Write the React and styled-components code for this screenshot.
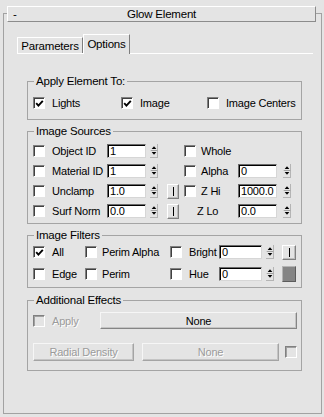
import React from "react";
import styled, { createGlobalStyle, css } from "styled-components";

const BG = "#e4e4e4";

const Global = createGlobalStyle`
  html, body { margin: 0; padding: 0; background: ${BG}; }
  body {
    font-family: "Liberation Sans", Arial, sans-serif;
    font-size: 11px;
    letter-spacing: -0.2px;
    color: #000;
  }
  * { box-sizing: border-box; }
`;

const Page = styled.div`
  width: 324px;
  height: 417px;
  overflow: hidden;
  background: ${BG};
  padding-top: 13px;
`;

const Rollout = styled.div`
  margin-left: 3px;
  width: 319px;
  height: 401px;
  border: 1px solid #a2a2a2;
  display: flex;
  flex-direction: column;
`;

const Header = styled.div`
  margin: -8px 5px 0 3px;
  height: 16px;
  display: grid;
  grid-template-columns: 24px 1fr 24px;
  align-items: center;
  background: ${BG};
  border: 1px solid;
  border-color: #ffffff #8c8c8c #8c8c8c #ffffff;
  line-height: 14px;
  font-size: 11.5px;
`;

const Minus = styled.span`
  padding-left: 5px;
`;

const Title = styled.span`
  text-align: center;
`;

const TabStrip = styled.div`
  display: flex;
  align-items: flex-end;
  margin: 12px 8px 0 13px;
  height: 20px;
  border-bottom: 1px solid #ffffff;
`;

const Tab = styled.div`
  width: ${(p) => p.$w}px;
  height: 16px;
  display: flex;
  align-items: center;
  justify-content: center;
  font-size: 11.5px;
  border: 1px solid;
  border-bottom: none;
  border-color: #ffffff #7e7e7e #7e7e7e #ffffff;
  ${(p) =>
    p.$active &&
    css`
      height: 20px;
      margin-bottom: -1px;
      background: ${BG};
      padding-bottom: 2px;
    `}
`;

const Groups = styled.div`
  display: flex;
  flex-direction: column;
  gap: 5px;
  margin: 21px 19px 0 23px;
`;

const Group = styled.fieldset`
  margin: ${(p) => p.$mt ?? 0}px 0 0 0;
  min-width: 0;
  border: 1px solid #a4a4a4;
  padding: ${(p) => p.$pad};
`;

const Legend = styled.legend`
  margin-left: 1px;
  padding: 0 2px;
  line-height: 12px;
  font-size: 11.5px;
`;

const Grid = styled.div`
  display: grid;
  grid-template-columns: ${(p) => p.$cols};
  grid-auto-rows: 14px;
  row-gap: ${(p) => p.$gap}px;
  align-items: center;
`;

const Label = styled.span`
  padding-left: ${(p) => p.$pl ?? 7}px;
  white-space: nowrap;
  line-height: 14px;
  ${(p) =>
    p.$disabled &&
    css`
      color: #9b9b9b;
      text-shadow: 1px 1px 0 #ffffff;
    `}
`;

const End = styled.div`
  display: flex;
  justify-content: flex-end;
  align-items: center;
`;

const Box = styled.span`
  display: inline-flex;
  flex: none;
  align-items: center;
  justify-content: center;
  width: 12px;
  height: 12px;
  margin-left: ${(p) => p.$ml ?? 0}px;
  background: ${(p) => (p.$disabled ? BG : "#ffffff")};
  border: 1px solid;
  border-color: #808080 #ffffff #ffffff #808080;
  box-shadow: inset 1px 1px 0 ${(p) => (p.$disabled ? "#a0a0a0" : "#404040")};
`;

const Field = styled.div`
  width: ${(p) => p.$w}px;
  height: 14px;
  background: #ffffff;
  border: 1px solid;
  border-color: #6a6a6a #d6d6d6 #d6d6d6 #6a6a6a;
  box-shadow: inset 1px 1px 0 #000000;
  padding-left: 2px;
  line-height: 13px;
  overflow: hidden;
  white-space: nowrap;
`;

const SpinBox = styled.div`
  width: 8px;
  height: 14px;
  display: flex;
  flex-direction: column;
  border-right: 1px solid #b4b4b4;
  border-bottom: 1px solid #b4b4b4;
`;

const IBtn = styled.div`
  width: ${(p) => p.$w ?? 12}px;
  height: 15px;
  display: flex;
  align-items: center;
  justify-content: center;
  border: 1px solid;
  border-color: #ffffff #808080 #808080 #ffffff;
  box-shadow: inset -1px -1px 0 #bdbdbd;
`;

const IBar = styled.span`
  width: 1px;
  height: 9px;
  background: #000000;
`;

const Swatch = styled.div`
  width: 14px;
  height: 16px;
  background: #858585;
  border: 1px solid;
  border-color: #b4b4b4 #5c5c5c #5c5c5c #b4b4b4;
`;

const Row = styled.div`
  display: flex;
  align-items: center;
  height: ${(p) => p.$h}px;
  margin-top: ${(p) => p.$mt ?? 0}px;
`;

const Button = styled.div`
  flex: none;
  width: ${(p) => p.$w}px;
  height: ${(p) => p.$h}px;
  margin-left: ${(p) => p.$ml ?? 0}px;
  display: flex;
  align-items: center;
  justify-content: center;
  border: 1px solid;
  border-color: #f6f6f6 #858585 #858585 #f6f6f6;
  box-shadow: inset -1px -1px 0 #c4c4c4;
  white-space: nowrap;
  ${(p) =>
    p.$disabled &&
    css`
      color: #9b9b9b;
      text-shadow: 1px 1px 0 #ffffff;
      border-color: #f6f6f6 #a4a4a4 #a4a4a4 #f6f6f6;
    `}
`;

const ApplyGrid = styled.div`
  display: grid;
  grid-template-columns: 88px 86px auto;
  align-items: center;
  height: 12px;
`;

const Item = styled.div`
  display: flex;
  align-items: center;
`;

const ApplyLabel = styled(Label)`
  width: 55px;
`;

function Check({ checked, disabled, ml }) {
  return (
    <Box $disabled={disabled} $ml={ml}>
      {checked && (
        <svg width="9" height="9" viewBox="0 0 9 9">
          <path d="M1.2 4.2 L3.4 6.6 L7.8 1.8" fill="none" stroke="#000" strokeWidth="1.9" />
        </svg>
      )}
    </Box>
  );
}

function Spinner() {
  return (
    <SpinBox>
      <svg width="8" height="14" viewBox="0 0 8 14">
        <path d="M4 2.5 L6.5 5.5 L1.5 5.5 Z" fill="#000" />
        <line x1="0.5" y1="7" x2="7.5" y2="7" stroke="#9a9a9a" strokeWidth="1" />
        <path d="M1.5 8.5 L6.5 8.5 L4 11.5 Z" fill="#000" />
      </svg>
    </SpinBox>
  );
}

function IButton({ w }) {
  return (
    <IBtn $w={w}>
      <IBar />
    </IBtn>
  );
}

const SRC_COLS = "12px 62px 39px 12px 21px 17px 42px 39px 14px";
const FLT_COLS = "12px 40px 12px 73px 12px 37px 43px 12px 22px";

export default function App() {
  return (
    <Page>
      <Global />
      <Rollout>
        <Header>
          <Minus>-</Minus>
          <Title>Glow Element</Title>
          <span />
        </Header>

        <TabStrip>
          <Tab $w={66}>Parameters</Tab>
          <Tab $w={47} $active>
            Options
          </Tab>
        </TabStrip>

        <Groups>
          <Group $pad="9px 0 11px 5px">
            <Legend>Apply Element To:</Legend>
            <ApplyGrid>
              <Item>
                <Check checked />
                <Label>Lights</Label>
              </Item>
              <Item>
                <Check checked />
                <Label>Image</Label>
              </Item>
              <Item>
                <Check />
                <Label>Image Centers</Label>
              </Item>
            </ApplyGrid>
          </Group>

          <Group $pad="7px 0 5px 5px">
            <Legend>Image Sources</Legend>
            <Grid $cols={SRC_COLS} $gap={6}>
              <Check />
              <Label>Object ID</Label>
              <Field $w={39}>1</Field>
              <End><Spinner /></End>
              <span />
              <End><Check /></End>
              <Label $pl={5}>Whole</Label>
              <span />
              <span />

              <Check />
              <Label>Material ID</Label>
              <Field $w={39}>1</Field>
              <End><Spinner /></End>
              <span />
              <End><Check /></End>
              <Label $pl={5}>Alpha</Label>
              <Field $w={39}>0</Field>
              <End><Spinner /></End>

              <Check />
              <Label>Unclamp</Label>
              <Field $w={39}>1.0</Field>
              <End><Spinner /></End>
              <End><IButton /></End>
              <End><Check /></End>
              <Label $pl={5}>Z Hi</Label>
              <Field $w={39}>1000.0</Field>
              <End><Spinner /></End>

              <Check />
              <Label>Surf Norm</Label>
              <Field $w={39}>0.0</Field>
              <End><Spinner /></End>
              <End><IButton /></End>
              <span />
              <Label $pl={1}>Z Lo</Label>
              <Field $w={39}>0.0</Field>
              <End><Spinner /></End>
            </Grid>
          </Group>

          <Group $pad="4px 0 6px 5px">
            <Legend>Image Filters</Legend>
            <Grid $cols={FLT_COLS} $gap={8}>
              <Check checked />
              <Label>All</Label>
              <Check />
              <Label $pl={5}>Perim Alpha</Label>
              <Check />
              <Label>Bright</Label>
              <Field $w={43}>0</Field>
              <End><Spinner /></End>
              <End><IButton w={14} /></End>

              <Check />
              <Label>Edge</Label>
              <Check />
              <Label $pl={5}>Perim</Label>
              <Check />
              <Label>Hue</Label>
              <Field $w={43}>0</Field>
              <End><Spinner /></End>
              <End><Swatch /></End>
            </Grid>
          </Group>

          <Group $pad="6px 4px 9px 5px" $mt={1}>
            <Legend>Additional Effects</Legend>
            <Row $h={17}>
              <Check disabled />
              <ApplyLabel $disabled>Apply</ApplyLabel>
              <Button $w={197} $h={17}>
                None
              </Button>
            </Row>
            <Row $h={18} $mt={14}>
              <Button $w={101} $h={18} $disabled>
                Radial Density
              </Button>
              <Button $w={137} $h={18} $ml={8} $disabled>
                None
              </Button>
              <Check disabled ml={6} />
            </Row>
          </Group>
        </Groups>
      </Rollout>
    </Page>
  );
}
